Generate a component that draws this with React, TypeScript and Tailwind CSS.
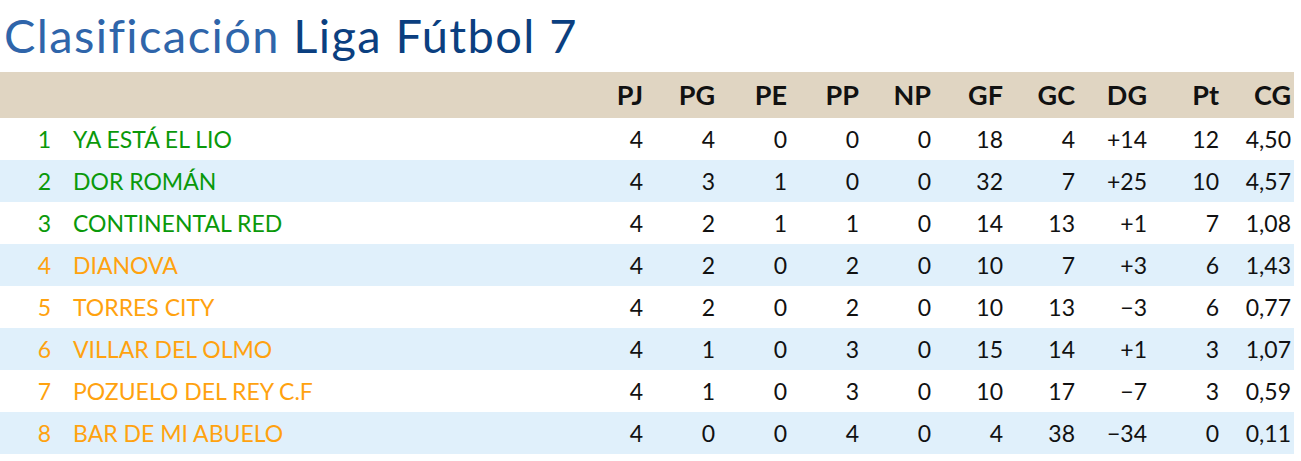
const cols = ["PJ", "PG", "PE", "PP", "NP", "GF", "GC", "DG", "Pt", "CG"];

type Row = {
  pos: number;
  team: string;
  stats: string[];
};

const rows: Row[] = [
  { pos: 1, team: "YA ESTÁ EL LIO", stats: ["4", "4", "0", "0", "0", "18", "4", "+14", "12", "4,50"] },
  { pos: 2, team: "DOR ROMÁN", stats: ["4", "3", "1", "0", "0", "32", "7", "+25", "10", "4,57"] },
  { pos: 3, team: "CONTINENTAL RED", stats: ["4", "2", "1", "1", "0", "14", "13", "+1", "7", "1,08"] },
  { pos: 4, team: "DIANOVA", stats: ["4", "2", "0", "2", "0", "10", "7", "+3", "6", "1,43"] },
  { pos: 5, team: "TORRES CITY", stats: ["4", "2", "0", "2", "0", "10", "13", "−3", "6", "0,77"] },
  { pos: 6, team: "VILLAR DEL OLMO", stats: ["4", "1", "0", "3", "0", "15", "14", "+1", "3", "1,07"] },
  { pos: 7, team: "POZUELO DEL REY C.F", stats: ["4", "1", "0", "3", "0", "10", "17", "−7", "3", "0,59"] },
  { pos: 8, team: "BAR DE MI ABUELO", stats: ["4", "0", "0", "4", "0", "4", "38", "−34", "0", "0,11"] },
];

const grid = "grid grid-cols-[58px_1fr_repeat(10,72px)] items-center";

export default function App() {
  return (
    <div className="w-[1301px] h-[461px] bg-white font-['Lato',sans-serif]">
      <h1 className="h-[72px] pl-[4px] pt-[8px] text-[47px] leading-[54px] tracking-[1.4px] whitespace-nowrap">
        <span className="text-[#2f65aa]">Clasificación</span>{" "}
        <span className="text-[#0b3f80]">Liga Fútbol 7</span>
      </h1>

      <div className="w-[1294px]">
        <div className={`${grid} h-[46px] bg-[#e0d5c2] text-[27px] font-bold text-[#111]`}>
          <div />
          <div />
          {cols.map((c) => (
            <div key={c} className="text-right pr-[3px]">
              {c}
            </div>
          ))}
        </div>

        {rows.map((r) => {
          const color = r.pos <= 3 ? "text-[#0a990a]" : "text-[#ffa20f]";
          return (
            <div
              key={r.pos}
              className={`${grid} h-[42px] text-[23px] ${
                r.pos % 2 === 0 ? "bg-[#e0f0fb]" : "bg-white"
              }`}
            >
              <div className={`${color} text-right pr-[7px]`}>{r.pos}</div>
              <div className={`${color} pl-[15px] whitespace-nowrap`}>{r.team}</div>
              {r.stats.map((s, i) => (
                <div key={i} className="text-right pr-[3px] text-[#111]">
                  {s}
                </div>
              ))}
            </div>
          );
        })}
      </div>
    </div>
  );
}
